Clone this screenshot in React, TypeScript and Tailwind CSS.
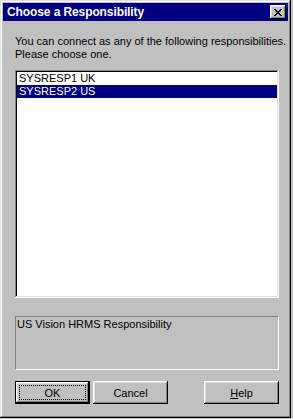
import { useState } from "react";

const items = ["SYSRESP1 UK", "SYSRESP2 US"];

const raised =
  "shadow-[inset_-1px_-1px_0_#000,inset_1px_1px_0_#fff,inset_-2px_-2px_0_#808080,inset_2px_2px_0_#dfdfdf]";

function Win95Button({ children, isDefault }: { children: React.ReactNode; isDefault?: boolean }) {
  if (isDefault) {
    return (
      <button className="h-[23px] w-[75px] border border-black bg-[#c0c0c0] p-0">
        <div className={`flex h-full w-full items-center justify-center p-[3px] ${raised}`}>
          <div className="flex h-full w-full items-center justify-center border border-dotted border-black pt-[1px]">
            {children}
          </div>
        </div>
      </button>
    );
  }
  return (
    <button className={`flex h-[23px] w-[75px] items-center justify-center bg-[#c0c0c0] pt-[1px] ${raised}`}>
      {children}
    </button>
  );
}

export default function App() {
  const [selected, setSelected] = useState(1);

  return (
    <div className="h-[419px] w-[293px] bg-[#c0c0c0] font-['Liberation_Sans',Arial,sans-serif] text-[11px] leading-[13px] text-black">
      <div className="flex h-[418px] w-[291px] flex-col bg-[#c0c0c0] p-[3px] shadow-[inset_-1px_-1px_0_#000,inset_1px_1px_0_#dfdfdf,inset_-2px_-2px_0_#808080,inset_2px_2px_0_#fff]">
        {/* Title bar */}
        <div className="flex h-[18px] items-center justify-between bg-[#000080] pl-[4px] pr-[2px]">
          <span className="text-[12px] font-bold tracking-[-0.1px] text-white">Choose a Responsibility</span>
          <button className={`flex h-[14px] w-[16px] items-center justify-center bg-[#c0c0c0] ${raised}`}>
            <svg width="8" height="7" viewBox="0 0 8 7" shapeRendering="crispEdges">
              <path
                d="M0 0h2v1h-2zM6 0h2v1h-2zM1 1h2v1h-2zM5 1h2v1h-2zM2 2h4v1h-4zM3 3h2v1h-2zM2 4h4v1h-4zM1 5h2v1h-2zM5 5h2v1h-2zM0 6h2v1h-2zM6 6h2v1h-2z"
                fill="#000"
              />
            </svg>
          </button>
        </div>

        {/* Body */}
        <div className="flex flex-col pl-[12px] pt-[14px]">
          <p className="whitespace-nowrap">
            You can connect as any of the following responsibilities.
            <br />
            Please choose one.
          </p>

          {/* List */}
          <div className="mt-[9px] h-[228px] w-[264px] bg-white p-[2px] shadow-[inset_-1px_-1px_0_#fff,inset_1px_1px_0_#808080,inset_-2px_-2px_0_#dfdfdf,inset_2px_2px_0_#000]">
            {items.map((item, i) => (
              <div
                key={item}
                onClick={() => setSelected(i)}
                className={`h-[13px] pl-[2px] ${i === selected ? "bg-[#000080] text-white" : ""}`}
              >
                {item}
              </div>
            ))}
          </div>

          {/* Description */}
          <div className="mt-[18px] h-[54px] w-[264px] border border-b-white border-l-[#808080] border-r-white border-t-[#808080] pl-[1px] pt-[1px]">
            US Vision HRMS Responsibility
          </div>

          {/* Buttons */}
          <div className="mt-[11px] flex w-[264px] items-center">
            <Win95Button isDefault>OK</Win95Button>
            <div className="ml-[3px]">
              <Win95Button>Cancel</Win95Button>
            </div>
            <div className="ml-auto">
              <Win95Button>
                <span>
                  <span className="underline">H</span>elp
                </span>
              </Win95Button>
            </div>
          </div>
        </div>
      </div>
    </div>
  );
}
